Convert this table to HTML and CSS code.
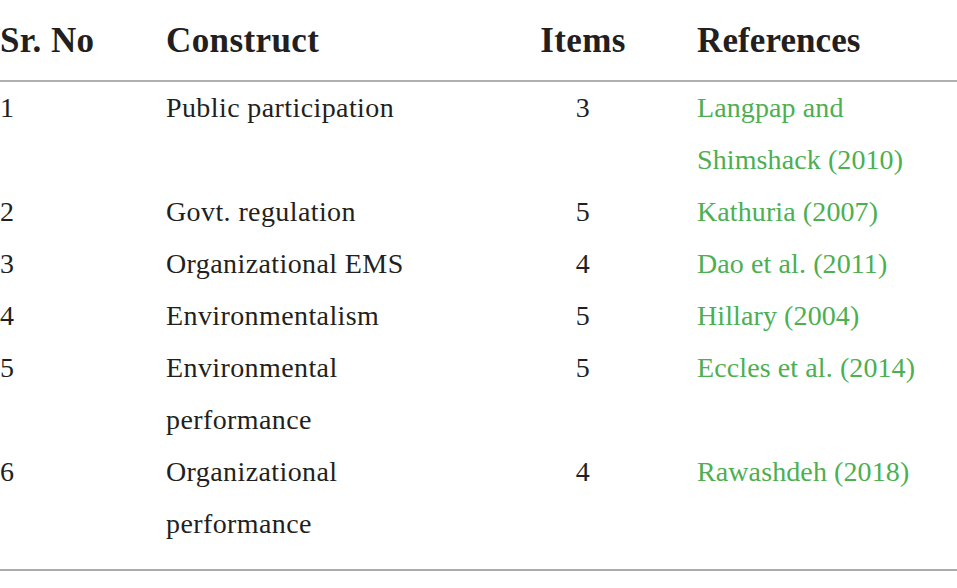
FILE: index.html
```html
<!DOCTYPE html>
<html>
<head>
<meta charset="utf-8">
<link rel="stylesheet" href="styles.css">
</head>
<body>
<table class="data-table">
  <colgroup>
    <col class="c-no">
    <col class="c-construct">
    <col class="c-items">
    <col class="c-refs">
  </colgroup>
  <thead>
    <tr>
      <th class="cell-no">Sr. No</th>
      <th class="cell-construct">Construct</th>
      <th class="cell-items">Items</th>
      <th class="cell-refs">References</th>
    </tr>
  </thead>
  <tbody>
    <tr>
      <td class="cell-no">1</td>
      <td class="cell-construct">Public participation</td>
      <td class="cell-items">3</td>
      <td class="cell-refs"><a class="ref">Langpap and Shimshack (2010)</a></td>
    </tr>
    <tr>
      <td class="cell-no">2</td>
      <td class="cell-construct">Govt. regulation</td>
      <td class="cell-items">5</td>
      <td class="cell-refs"><a class="ref">Kathuria (2007)</a></td>
    </tr>
    <tr>
      <td class="cell-no">3</td>
      <td class="cell-construct">Organizational EMS</td>
      <td class="cell-items">4</td>
      <td class="cell-refs"><a class="ref">Dao et al. (2011)</a></td>
    </tr>
    <tr>
      <td class="cell-no">4</td>
      <td class="cell-construct">Environmentalism</td>
      <td class="cell-items">5</td>
      <td class="cell-refs"><a class="ref">Hillary (2004)</a></td>
    </tr>
    <tr>
      <td class="cell-no">5</td>
      <td class="cell-construct">Environmental<br>performance</td>
      <td class="cell-items">5</td>
      <td class="cell-refs"><a class="ref">Eccles et al. (2014)</a></td>
    </tr>
    <tr class="last-row">
      <td class="cell-no">6</td>
      <td class="cell-construct">Organizational<br>performance</td>
      <td class="cell-items">4</td>
      <td class="cell-refs"><a class="ref">Rawashdeh (2018)</a></td>
    </tr>
  </tbody>
</table>
</body>
</html>
```

FILE: styles.css
```css
html, body {
  margin: 0;
  padding: 0;
  background: #ffffff;
}

body {
  font-family: "Liberation Serif", "Times New Roman", serif;
  color: #231f20;
}

.data-table {
  width: 957px;
  table-layout: fixed;
  border-collapse: collapse;
  border-bottom: 2px solid #ababab;
}

.c-no { width: 166px; }
.c-construct { width: 364px; }
.c-items { width: 106px; }
.c-refs { width: 321px; }

.data-table th {
  font-size: 35px;
  font-weight: bold;
  line-height: 40px;
  letter-spacing: 0.4px;
  padding: 21px 0 19px 0;
  text-align: left;
  border-bottom: 2px solid #b0b0b0;
  color: #231f20;
}

.data-table td {
  font-size: 28px;
  line-height: 52px;
  letter-spacing: 0.4px;
  padding: 0;
  vertical-align: top;
  text-align: left;
}

.data-table .cell-items {
  text-align: center;
}

.data-table .cell-refs {
  padding-left: 61px;
  letter-spacing: 0.1px;
}

.last-row td {
  padding-bottom: 19px;
}

.ref {
  color: #4caf50;
  text-decoration: none;
}
```
